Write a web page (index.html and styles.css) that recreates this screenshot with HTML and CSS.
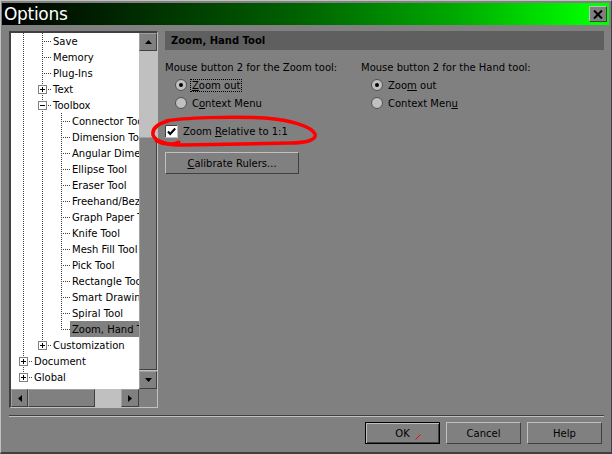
FILE: index.html
```html
<!DOCTYPE html>
<html lang="en">
<head>
  <meta charset="UTF-8">
  <title>Options</title>
  <link rel="stylesheet" href="styles.css">
</head>
<body>
<div class="window">
  <div class="titlebar">
    <span class="title">Options</span>
    <span class="close">
      <svg width="10" height="9" viewBox="0 0 10 9"><path d="M1 0.5l8 8M9 0.5l-8 8" stroke="#000" stroke-width="2"/></svg>
    </span>
  </div>

  <div class="main">
    <div class="treebox">
      <div class="tree">
        <div class="row"><span class="c i"></span><span class="c own t"></span><span class="lbl">Save</span></div>
        <div class="row"><span class="c i"></span><span class="c own t"></span><span class="lbl">Memory</span></div>
        <div class="row"><span class="c i"></span><span class="c own t"></span><span class="lbl">Plug-Ins</span></div>
        <div class="row"><span class="c i"></span><span class="c own t box"><svg width="9" height="9"><rect x="0.5" y="0.5" width="8" height="8" fill="#fff" stroke="#808080"/><path d="M2 4.5h5M4.5 2v5" stroke="#000"/></svg></span><span class="lbl">Text</span></div>
        <div class="row"><span class="c i"></span><span class="c own t box"><svg width="9" height="9"><rect x="0.5" y="0.5" width="8" height="8" fill="#fff" stroke="#808080"/><path d="M2 4.5h5" stroke="#000"/></svg></span><span class="lbl">Toolbox</span></div>
        <div class="row"><span class="c i"></span><span class="c i"></span><span class="c own t"></span><span class="lbl">Connector Tool</span></div>
        <div class="row"><span class="c i"></span><span class="c i"></span><span class="c own t"></span><span class="lbl">Dimension Tool</span></div>
        <div class="row"><span class="c i"></span><span class="c i"></span><span class="c own t"></span><span class="lbl">Angular Dimension Tool</span></div>
        <div class="row"><span class="c i"></span><span class="c i"></span><span class="c own t"></span><span class="lbl">Ellipse Tool</span></div>
        <div class="row"><span class="c i"></span><span class="c i"></span><span class="c own t"></span><span class="lbl">Eraser Tool</span></div>
        <div class="row"><span class="c i"></span><span class="c i"></span><span class="c own t"></span><span class="lbl">Freehand/Bezier Tool</span></div>
        <div class="row"><span class="c i"></span><span class="c i"></span><span class="c own t"></span><span class="lbl">Graph Paper Tool</span></div>
        <div class="row"><span class="c i"></span><span class="c i"></span><span class="c own t"></span><span class="lbl">Knife Tool</span></div>
        <div class="row"><span class="c i"></span><span class="c i"></span><span class="c own t"></span><span class="lbl">Mesh Fill Tool</span></div>
        <div class="row"><span class="c i"></span><span class="c i"></span><span class="c own t"></span><span class="lbl">Pick Tool</span></div>
        <div class="row"><span class="c i"></span><span class="c i"></span><span class="c own t"></span><span class="lbl">Rectangle Tool</span></div>
        <div class="row"><span class="c i"></span><span class="c i"></span><span class="c own t"></span><span class="lbl">Smart Drawing Tool</span></div>
        <div class="row"><span class="c i"></span><span class="c i"></span><span class="c own t"></span><span class="lbl">Spiral Tool</span></div>
        <div class="row"><span class="c i"></span><span class="c i"></span><span class="c own l"></span><span class="lbl sel">Zoom, Hand Tool</span></div>
        <div class="row"><span class="c i"></span><span class="c own l box"><svg width="9" height="9"><rect x="0.5" y="0.5" width="8" height="8" fill="#fff" stroke="#808080"/><path d="M2 4.5h5M4.5 2v5" stroke="#000"/></svg></span><span class="lbl">Customization</span></div>
        <div class="row"><span class="c own t box"><svg width="9" height="9"><rect x="0.5" y="0.5" width="8" height="8" fill="#fff" stroke="#808080"/><path d="M2 4.5h5M4.5 2v5" stroke="#000"/></svg></span><span class="lbl">Document</span></div>
        <div class="row"><span class="c own l box"><svg width="9" height="9"><rect x="0.5" y="0.5" width="8" height="8" fill="#fff" stroke="#808080"/><path d="M2 4.5h5M4.5 2v5" stroke="#000"/></svg></span><span class="lbl">Global</span></div>
      </div>

      <div class="vscroll">
        <span class="sbtn"><svg width="7" height="4"><polygon points="0,4 7,4 3.5,0" fill="#000"/></svg></span>
        <span class="vtrack-top"></span>
        <span class="vthumb"></span>
        <span class="vtrack-bottom"></span>
        <span class="sbtn"><svg width="7" height="4"><polygon points="0,0 7,0 3.5,4" fill="#000"/></svg></span>
      </div>

      <div class="hscroll">
        <span class="sbtn narrow"><svg width="4" height="7"><polygon points="4,0 4,7 0,3.5" fill="#000"/></svg></span>
        <span class="hthumb"></span>
        <span class="htrack"></span>
        <span class="sbtn"><svg width="4" height="7"><polygon points="0,0 0,7 4,3.5" fill="#000"/></svg></span>
      </div>
      <div class="corner"></div>
    </div>

    <div class="panel">
      <div class="panel-head">Zoom, Hand Tool</div>
      <div class="cols">
        <div class="col">
          <div class="caption">Mouse button 2 for the Zoom tool:</div>
          <div class="radio first">
            <svg width="12" height="12"><circle cx="6" cy="6" r="5.5" fill="#c0c0c0" stroke="#505050"/><circle cx="6" cy="6" r="2" fill="#000"/></svg>
            <span class="focus"><u>Z</u>oom out</span>
          </div>
          <div class="radio">
            <svg width="12" height="12"><circle cx="6" cy="6" r="5.5" fill="#c0c0c0" stroke="#505050"/></svg>
            <span>C<u>o</u>ntext Menu</span>
          </div>
        </div>
        <div class="col">
          <div class="caption">Mouse button 2 for the Hand tool:</div>
          <div class="radio first">
            <svg width="12" height="12"><circle cx="6" cy="6" r="5.5" fill="#c0c0c0" stroke="#505050"/><circle cx="6" cy="6" r="2" fill="#000"/></svg>
            <span>Zoo<u>m</u> out</span>
          </div>
          <div class="radio">
            <svg width="12" height="12"><circle cx="6" cy="6" r="5.5" fill="#c0c0c0" stroke="#505050"/></svg>
            <span>Context Men<u>u</u></span>
          </div>
        </div>
      </div>

      <div class="check">
        <svg width="13" height="13"><rect x="0" y="0" width="13" height="13" fill="#fff"/><path d="M0.5 12.5V0.5H12.5" fill="none" stroke="#404040"/><path d="M0.5 12.5H12.5V0.5" fill="none" stroke="#c0c0c0"/><path d="M3 6.5l2.2 2.5 5-5.5" fill="none" stroke="#000" stroke-width="2"/></svg>
        <span>Zoom <u>R</u>elative to 1:1</span>
      </div>

      <div class="btn calibrate"><span><u>C</u>alibrate Rulers...</span></div>

      <svg class="scribble" width="175" height="45" viewBox="150 111 175 45">
        <path d="M166 121 C182 118 230 116 265 118 C292 120 312 127 315 134 C317 140 306 143 290 143 L182 145 C166 145 155 141 153 135 C152 129 157 124 168 121" fill="none" stroke="#f00" stroke-width="3.5" stroke-linecap="round"/>
        <path d="M156 141 C163 145 172 145 179 142" fill="none" stroke="#f00" stroke-width="3" stroke-linecap="round"/>
      </svg>
    </div>
  </div>

  <div class="sep"></div>

  <div class="footer">
    <div class="btn ok"><span>OK</span>
      <svg class="tick" width="7" height="6"><path d="M0.5 5.5L5.5 0.5" stroke="#f00"/></svg>
    </div>
    <div class="btn"><span>Cancel</span></div>
    <div class="btn"><span>Help</span></div>
  </div>
</div>
</body>
</html>
```

FILE: styles.css
```css
body {
    margin: 0;
    background: #808080;
    font-family: "DejaVu Sans", sans-serif;
    font-size: 10px;
    color: #000;
}
.window {
    width: 612px;
    height: 454px;
    box-sizing: border-box;
    border: 1px solid;
    border-color: #c0c0c0 #404040 #404040 #c0c0c0;
    border-bottom-width: 2px;
    padding: 2px 2px 0 1px;
    display: flex;
    flex-direction: column;
}

/* title bar */
.titlebar {
    height: 22px;
    flex: none;
    display: flex;
    align-items: center;
    justify-content: space-between;
    padding: 0 2px;
    background: linear-gradient(to right, #000 0%, #002c00 22%, #006400 50%, #00aa00 75%, #00ff00 97%);
}
.title {
    color: #fff;
    font-size: 17px;
    line-height: 22px;
    letter-spacing: -0.3px;
}
.close {
    width: 18px;
    height: 16px;
    box-sizing: border-box;
    border: 1px solid;
    border-color: #c0c0c0 #404040 #404040 #c0c0c0;
    background: #808080;
    display: flex;
    align-items: center;
    justify-content: center;
}

.main {
    display: flex;
    gap: 7px;
    margin: 6px 5px 0 7px;
    height: 377px;
    flex: none;
}

/* tree view */
.treebox {
    width: 149px;
    box-sizing: border-box;
    border-style: solid;
    border-width: 2px 1px 1px 2px;
    border-color: #404040 #c0c0c0 #c0c0c0 #404040;
    display: grid;
    grid-template-columns: 128px 18px;
    grid-template-rows: 356px 18px;
}
.tree {
    background: #fff;
    overflow: hidden;
}
.row {
    display: flex;
    height: 16px;
    white-space: nowrap;
}
.c {
    flex: none;
    width: 19px;
    height: 16px;
    box-sizing: border-box;
}
.c.own {
    width: 21px;
}
.c.i {
    background: repeating-linear-gradient(to bottom, #404040 0 1px, transparent 1px 2px) 12px 0 / 1px 16px no-repeat;
}
.c.t {
    background:
        repeating-linear-gradient(to bottom, #404040 0 1px, transparent 1px 2px) 12px 0 / 1px 16px no-repeat,
        repeating-linear-gradient(to right, #404040 0 1px, transparent 1px 2px) 14px 8px / 7px 1px no-repeat;
}
.c.l {
    background:
        repeating-linear-gradient(to bottom, #404040 0 1px, transparent 1px 2px) 12px 0 / 1px 9px no-repeat,
        repeating-linear-gradient(to right, #404040 0 1px, transparent 1px 2px) 14px 8px / 7px 1px no-repeat;
}
.c.box {
    padding: 4px 0 0 8px;
}
.c.box svg {
    display: block;
}
.lbl {
    flex: none;
    padding: 1px 2px 0;
    line-height: 15px;
}
.lbl.sel {
    background: #808080;
}

/* scroll bars */
.vscroll {
    display: flex;
    flex-direction: column;
    background: #c0c0c0;
}
.hscroll {
    display: flex;
    background: #c0c0c0;
}
.sbtn {
    flex: none;
    width: 18px;
    height: 18px;
    box-sizing: border-box;
    background: #808080;
    border: 1px solid;
    border-color: #a0a0a0 #404040 #404040 #a0a0a0;
    display: flex;
    align-items: center;
    justify-content: center;
}
.sbtn.narrow {
    width: 17px;
}
.vtrack-top {
    flex: none;
    height: 86px;
}
.vthumb {
    flex: none;
    height: 233px;
    box-sizing: border-box;
    background: #808080;
    border: 1px solid;
    border-color: #a0a0a0 #404040 #404040 #a0a0a0;
}
.vtrack-bottom {
    flex: 1;
}
.hthumb {
    flex: none;
    width: 67px;
    box-sizing: border-box;
    background: #808080;
    border: 1px solid;
    border-color: #a0a0a0 #404040 #404040 #a0a0a0;
}
.htrack {
    flex: 1;
}
.corner {
    background: #808080;
}

/* right panel */
.panel {
    flex: 1;
    position: relative;
}
.panel-head {
    height: 19px;
    line-height: 20px;
    background: #5f5f5f;
    font-weight: bold;
    padding-left: 6px;
}
.cols {
    display: flex;
    margin-top: 11px;
}
.col {
    width: 196px;
}
.caption {
    line-height: 13px;
}
.radio {
    display: flex;
    align-items: center;
    gap: 5px;
    height: 18px;
    padding-left: 10px;
}
.radio.first {
    margin-top: 2px;
}
.radio svg,
.check svg {
    flex: none;
}
.focus {
    outline: 1px dotted #000;
    padding: 0 1px;
    margin-left: -1px;
}
.check {
    display: flex;
    align-items: center;
    gap: 5px;
    height: 18px;
    margin-top: 10px;
}
.btn {
    box-sizing: border-box;
    height: 22px;
    border: 1px solid;
    border-color: #c0c0c0 #404040 #404040 #c0c0c0;
    background: #808080;
    display: flex;
    align-items: center;
    justify-content: center;
}
.calibrate {
    width: 134px;
    margin-top: 12px;
}
.scribble {
    position: absolute;
    left: -15px;
    top: 80px;
}

/* bottom */
.sep {
    flex: none;
    height: 0;
    margin: 7px 5px 0 7px;
    border-top: 1px solid #404040;
    border-bottom: 1px solid #c0c0c0;
}
.footer {
    display: flex;
    justify-content: flex-end;
    gap: 6px;
    margin-top: 5px;
    padding-right: 7px;
}
.footer .btn {
    width: 75px;
}
.footer .ok {
    position: relative;
    border-color: #000;
    box-shadow: inset 1px 1px #c0c0c0, inset -1px -1px #404040;
}
.tick {
    position: absolute;
    left: 49px;
    top: 11px;
}
```
